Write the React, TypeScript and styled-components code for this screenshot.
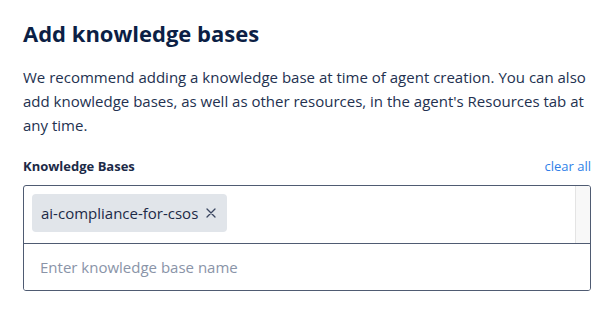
import { createGlobalStyle } from 'styled-components';
import styled from 'styled-components';

const GlobalStyle = createGlobalStyle`
  body {
    margin: 0;
    background: #ffffff;
    font-family: "Open Sans", sans-serif;
  }
`;

const Page = styled.div`
  width: 568px;
  padding: 18px 24px 0 23px;
`;

const Title = styled.h2`
  margin: 0;
  font-size: 22px;
  line-height: 30px;
  font-weight: 700;
  color: #0c1f45;
`;

const Intro = styled.p`
  margin: 17px 0 0;
  font-size: 15px;
  line-height: 24px;
  color: #233150;
`;

const FieldHeader = styled.div`
  display: flex;
  justify-content: space-between;
  align-items: baseline;
  margin-top: 20px;
`;

const Label = styled.label`
  font-size: 13px;
  font-weight: 700;
  color: #1c2a47;
`;

const ClearAll = styled.a`
  font-size: 13px;
  color: #2f7fe8;
  cursor: pointer;
`;

const Box = styled.div`
  margin-top: 10px;
  border: 1px solid #4f5b72;
  border-radius: 3px;
  overflow: hidden;
`;

const ChipArea = styled.div`
  display: flex;
  height: 57px;
  border-bottom: 1px solid #4f5b72;
`;

const Chips = styled.div`
  flex: 1;
  display: flex;
  flex-wrap: wrap;
  align-items: flex-start;
  gap: 6px;
  padding: 8px;
`;

const Gutter = styled.div`
  width: 14px;
  background: #f8f8f8;
  border-left: 1px solid #e4e4e4;
`;

const Chip = styled.span`
  display: inline-flex;
  align-items: center;
  gap: 8px;
  height: 38px;
  padding: 0 11px 0 9px;
  border-radius: 4px;
  background: #e1e5ea;
  font-size: 15px;
  color: #1c2a47;
`;

const Remove = styled.button`
  border: 0;
  padding: 0;
  background: none;
  display: flex;
  color: #3a4660;
  cursor: pointer;
`;

const Input = styled.input`
  display: block;
  width: 100%;
  box-sizing: border-box;
  height: 46px;
  border: 0;
  padding: 0 16px;
  font-family: inherit;
  font-size: 15px;
  color: #1c2a47;
  outline: none;
  &::placeholder {
    color: #8a94a8;
  }
`;

const XIcon = () => (
  <svg width="10" height="10" viewBox="0 0 10 10">
    <path d="M1 1 L9 9 M9 1 L1 9" stroke="currentColor" strokeWidth="1.3" strokeLinecap="round" />
  </svg>
);

export default function App() {
  return (
    <>
      <GlobalStyle />
      <Page>
        <Title>Add knowledge bases</Title>
        <Intro>
          We recommend adding a knowledge base at time of agent creation. You can also add
          knowledge bases, as well as other resources, in the agent's Resources tab at any time.
        </Intro>
        <FieldHeader>
          <Label>Knowledge Bases</Label>
          <ClearAll>clear all</ClearAll>
        </FieldHeader>
        <Box>
          <ChipArea>
            <Chips>
              <Chip>
                ai-compliance-for-csos
                <Remove aria-label="remove">
                  <XIcon />
                </Remove>
              </Chip>
            </Chips>
            <Gutter />
          </ChipArea>
          <Input placeholder="Enter knowledge base name" />
        </Box>
      </Page>
    </>
  );
}
